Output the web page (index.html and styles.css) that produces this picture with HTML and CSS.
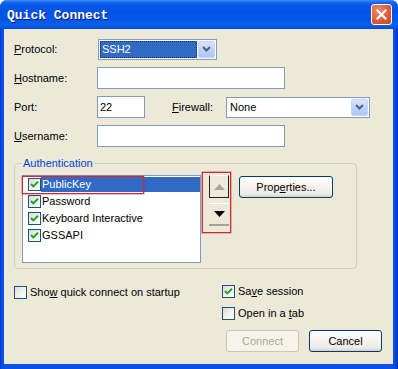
FILE: index.html
```html
<!DOCTYPE html>
<html>
<head>
<meta charset="utf-8">
<link rel="stylesheet" href="styles.css">
</head>
<body>
<div class="window">
  <div class="titlebar">
    <span class="title">Quick Connect</span>
    <span class="close"><svg width="11" height="11" viewBox="0 0 11 11"><path d="M1.5 1.5 L9.5 9.5 M9.5 1.5 L1.5 9.5" stroke="#fff" stroke-width="2.2" stroke-linecap="square"/></svg></span>
  </div>
  <div class="client">
    <div class="form">
      <div class="row">
        <span class="lbl"><u>P</u>rotocol:</span>
        <div class="select sel-proto"><span class="sel-text focused">SSH2</span><span class="drop"><svg width="9" height="6" viewBox="0 0 9 6"><path d="M1 1 L4.5 4.5 L8 1" fill="none" stroke="#4D6185" stroke-width="2"/></svg></span></div>
      </div>
      <div class="row">
        <span class="lbl"><u>H</u>ostname:</span>
        <div class="input w-host"></div>
      </div>
      <div class="row">
        <span class="lbl">Port:</span>
        <div class="input w-port">22</div>
        <span class="lbl fw"><u>F</u>irewall:</span>
        <div class="select sel-fw"><span class="sel-text">None</span><span class="drop"><svg width="9" height="6" viewBox="0 0 9 6"><path d="M1 1 L4.5 4.5 L8 1" fill="none" stroke="#4D6185" stroke-width="2"/></svg></span></div>
      </div>
      <div class="row">
        <span class="lbl"><u>U</u>sername:</span>
        <div class="input w-host"></div>
      </div>
    </div>

    <fieldset class="group">
      <legend>Authentication</legend>
      <div class="group-body">
        <div class="list">
          <div class="item sel"><span class="cb checked"><svg width="11" height="11" viewBox="0 0 11 11"><path d="M2 5 L4.3 7.4 L9 2.8" fill="none" stroke="#21A121" stroke-width="2"/></svg></span><span class="txt">PublicKey</span></div>
          <div class="item"><span class="cb checked"><svg width="11" height="11" viewBox="0 0 11 11"><path d="M2 5 L4.3 7.4 L9 2.8" fill="none" stroke="#21A121" stroke-width="2"/></svg></span><span class="txt">Password</span></div>
          <div class="item"><span class="cb checked"><svg width="11" height="11" viewBox="0 0 11 11"><path d="M2 5 L4.3 7.4 L9 2.8" fill="none" stroke="#21A121" stroke-width="2"/></svg></span><span class="txt">Keyboard Interactive</span></div>
          <div class="item"><span class="cb checked"><svg width="11" height="11" viewBox="0 0 11 11"><path d="M2 5 L4.3 7.4 L9 2.8" fill="none" stroke="#21A121" stroke-width="2"/></svg></span><span class="txt">GSSAPI</span></div>
          <span class="annot annot-item"></span>
        </div>
        <div class="arrows">
          <span class="arrow up"><svg width="11" height="6" viewBox="0 0 11 6"><path d="M5.5 0 L11 6 L0 6 Z" fill="#ACA899"/></svg></span>
          <span class="arrow down"><svg width="11" height="6" viewBox="0 0 11 6"><path d="M0 0 L11 0 L5.5 6 Z" fill="#000"/></svg></span>
          <span class="annot annot-arrows"></span>
        </div>
        <button class="btn props">Prop<u>e</u>rties...</button>
      </div>
    </fieldset>

    <div class="bottom">
      <div class="bottom-left">
        <div class="chk-row"><span class="cb"></span><span>Sho<u>w</u> quick connect on startup</span></div>
      </div>
      <div class="bottom-right">
        <div class="chk-row"><span class="cb checked"><svg width="11" height="11" viewBox="0 0 11 11"><path d="M2 5 L4.3 7.4 L9 2.8" fill="none" stroke="#21A121" stroke-width="2"/></svg></span><span>Sa<u>v</u>e session</span></div>
        <div class="chk-row"><span class="cb"></span><span>Open in a <u>t</u>ab</span></div>
        <div class="buttons">
          <button class="btn disabled">Connect</button>
          <button class="btn">Cancel</button>
        </div>
      </div>
    </div>
  </div>
</div>
</body>
</html>
```

FILE: styles.css
```css
* { box-sizing: border-box; }
html, body { margin: 0; padding: 0; background: #fff; }
body {
  font-family: "Liberation Sans", Arial, sans-serif;
  font-size: 11px;
  color: #000;
}
.window {
  width: 398px;
  height: 369px;
  background: linear-gradient(90deg, #0034C8 0, #0852E6 2px, #0852E6 394px, #0030C0 398px);
  border-radius: 7px 7px 0 0;
  display: flex;
  flex-direction: column;
  overflow: hidden;
}
.titlebar {
  height: 29px;
  flex: none;
  display: flex;
  align-items: center;
  padding: 0 6px 0 7px;
  background: linear-gradient(180deg, #3D8EF8 0, #1A6CF0 2px, #0758E8 5px, #0253E3 12px, #0457E6 20px, #0A60EA 25px, #0650E0 28px, #0044D0 29px);
}
.title {
  font-family: "Liberation Mono", "DejaVu Sans Mono", monospace;
  font-weight: bold;
  font-size: 13px;
  color: #fff;
  text-shadow: 1px 1px 0 #0A1883;
  margin-top: 1px;
}
.close {
  margin-left: auto;
  width: 21px;
  height: 21px;
  border: 1px solid #fff;
  border-radius: 3px;
  background: radial-gradient(circle at 35% 30%, #EE8F72 0, #E05A3A 55%, #C9431F 100%);
  display: flex;
  align-items: center;
  justify-content: center;
}
.client {
  flex: 1;
  margin: 0 5px 5px 4px;
  background: #ECE9D8;
  padding: 9px 11px 0 10px;
}
.form {
  display: flex;
  flex-direction: column;
  gap: 7px;
}
.row {
  display: flex;
  align-items: center;
  height: 22px;
}
.lbl {
  width: 83px;
  flex: none;
}
.input {
  height: 22px;
  border: 1px solid #7F9DB9;
  background: #fff;
  padding: 0 2px;
  line-height: 20px;
}
.w-host { width: 188px; }
.w-port { width: 48px; }
.fw { width: 54px; margin-left: 27px; }
.select {
  height: 21px;
  border: 1px solid #7F9DB9;
  background: #fff;
  display: flex;
  padding: 1px;
  gap: 1px;
}
.sel-proto { width: 119px; margin-left: 1px; }
.sel-fw { width: 144px; }
.sel-text {
  flex: 1;
  padding-left: 2px;
  line-height: 17px;
}
.sel-text.focused {
  background: #316AC5;
  color: #fff;
  outline: 1px dotted #1A2A50;
  outline-offset: -1px;
}
.drop {
  width: 17px;
  flex: none;
  border: 1px solid #C3D3FD;
  border-radius: 2px;
  background: linear-gradient(180deg, #D8E4FC 0, #BCD0F8 60%, #B0C6F4 100%);
  display: flex;
  align-items: center;
  justify-content: center;
}
.group {
  margin: 10px 0 0 0;
  width: 343px;
  min-width: 0;
  border: 1px solid #D0D0BF;
  border-radius: 4px;
  padding: 5px 7px 5px 7px;
}
.group legend {
  padding: 0 1px;
  color: #0046D5;
  line-height: 13px;
}
.group-body {
  display: flex;
  align-items: flex-start;
}
.list {
  position: relative;
  width: 179px;
  height: 88px;
  border: 1px solid #7F9DB9;
  background: #fff;
}
.item {
  display: flex;
  align-items: center;
  height: 17px;
  padding-left: 5px;
}
.item .txt {
  flex: 1;
  padding-left: 1px;
  height: 15px;
  line-height: 15px;
}
.item.sel .txt {
  background: #316AC5;
  color: #fff;
}
.cb {
  width: 13px;
  height: 13px;
  flex: none;
  border: 1px solid #1C5180;
  background: linear-gradient(135deg, #DCDCD7 0, #F4F4F0 60%, #fff 100%);
  display: flex;
  align-items: center;
  justify-content: center;
}
.annot {
  position: absolute;
  border: 1px solid #D3262F;
  box-shadow: 0 0 0 0.5px rgba(211, 38, 47, 0.6);
  pointer-events: none;
}
.annot-item {
  left: -1px;
  top: 0;
  width: 122px;
  height: 18px;
}
.arrows {
  position: relative;
  margin-left: 8px;
  display: flex;
  flex-direction: column;
  gap: 5px;
  width: 20px;
}
.arrow {
  height: 23px;
  display: flex;
  align-items: center;
  justify-content: center;
  background: #ECE9D8;
}
.arrow.up {
  border: 1px solid #222;
  border-top-color: #fff;
}
.arrow.down {
  border-top: 1px solid #fff;
  border-bottom: 2px solid #A5A293;
}
.annot-arrows {
  left: -7px;
  top: -3px;
  width: 29px;
  height: 61px;
}
.btn {
  font-family: "Liberation Sans", Arial, sans-serif;
  font-size: 11px;
  color: #000;
  width: 73px;
  height: 22px;
  border: 1px solid #003C74;
  border-radius: 3px;
  background: linear-gradient(180deg, #FFFFFF 0, #F6F5F0 40%, #ECEBE6 85%, #D6D0C5 100%);
  padding: 0;
}
.props {
  width: 94px;
  margin-left: 10px;
  margin-top: 1px;
}
.btn.disabled {
  border-color: #C9C7BA;
  background: #F5F4EA;
  color: #ACA899;
}
.bottom {
  display: flex;
  margin-top: 15px;
}
.bottom-left {
  width: 208px;
  flex: none;
  padding-top: 1px;
}
.bottom-right {
  flex: 1;
  display: flex;
  flex-direction: column;
  gap: 8px;
}
.chk-row {
  display: flex;
  align-items: center;
  height: 14px;
  gap: 3px;
}
.buttons {
  display: flex;
  justify-content: flex-end;
  gap: 10px;
  margin-top: 2px;
}
```
